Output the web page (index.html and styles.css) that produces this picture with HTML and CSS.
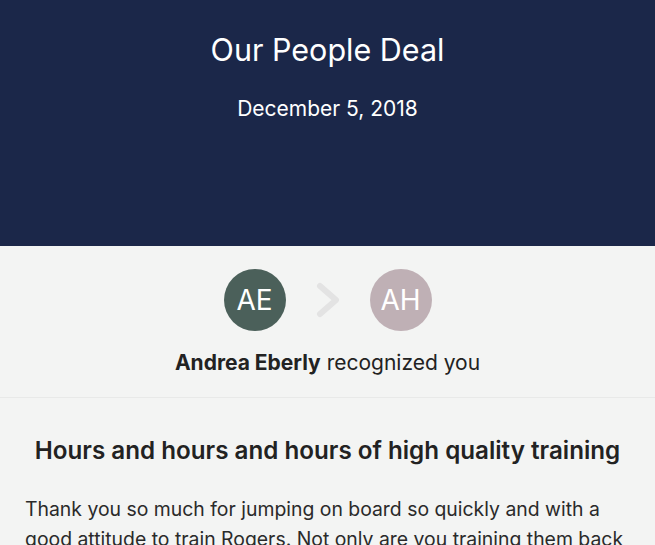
FILE: index.html
```html
<!DOCTYPE html>
<html>
<head>
<meta charset="utf-8">
<link rel="stylesheet" href="styles.css">
</head>
<body>
<header class="hero">
  <h1 class="title">Our People Deal</h1>
  <div class="date">December 5, 2018</div>
</header>
<section class="people">
  <div class="avatars">
    <div class="avatar ae">AE</div>
    <svg class="chev" width="28" height="40" viewBox="0 0 28 40"><path d="M6 6 L22 20 L6 34" fill="none" stroke="#e3e3e3" stroke-width="6" stroke-linecap="round" stroke-linejoin="round"/></svg>
    <div class="avatar ah">AH</div>
  </div>
  <p class="who"><strong>Andrea Eberly</strong> recognized you</p>
</section>
<section class="message">
  <h2 class="headline">Hours and hours and hours of high quality training</h2>
  <p class="body">Thank you so much for jumping on board so quickly and with a good attitude to train Rogers. Not only are you training them back</p>
</section>
</body>
</html>
```
FILE: styles.css
```css
html, body { margin: 0; padding: 0; }
body {
  background: #f3f4f3;
  font-family: Inter, Roboto, "Liberation Sans", sans-serif;
  color: #222;
  overflow: hidden;
  height: 545px;
}
.hero {
  background: #1b2749;
  color: #fff;
  height: 246px;
  display: flex;
  flex-direction: column;
  align-items: center;
  box-sizing: border-box;
  padding-top: 31px;
}
.title {
  margin: 0;
  font-weight: 400;
  font-size: 30.5px;
  line-height: 38px;
}
.date {
  margin-top: 28px;
  font-size: 21px;
  line-height: 24px;
}
.people {
  display: flex;
  flex-direction: column;
  align-items: center;
  padding-top: 23px;
  border-bottom: 1px solid #e8e9e8;
  height: 152px;
  box-sizing: border-box;
}
.avatars {
  display: flex;
  align-items: center;
  gap: 30px;
}
.avatar {
  width: 62px;
  height: 62px;
  border-radius: 50%;
  color: #fff;
  display: flex;
  align-items: center;
  justify-content: center;
  font-size: 28px;
}
.ae { background: #4b605a; }
.ah { background: #bfb0b5; }
.chev { margin: 0 -2px; }
.who {
  margin: 20px 0 0;
  font-size: 21px;
  line-height: 24px;
  color: #222;
}
.who strong { font-weight: 700; }
.message {
  padding: 38px 25px 0;
}
.headline {
  margin: 0;
  text-align: center;
  font-size: 24.2px;
  line-height: 30px;
  font-weight: 600;
  color: #222;
}
.body {
  margin: 28px 0 0;
  font-size: 19.4px;
  line-height: 30px;
  color: #2a2a2a;
}
```
